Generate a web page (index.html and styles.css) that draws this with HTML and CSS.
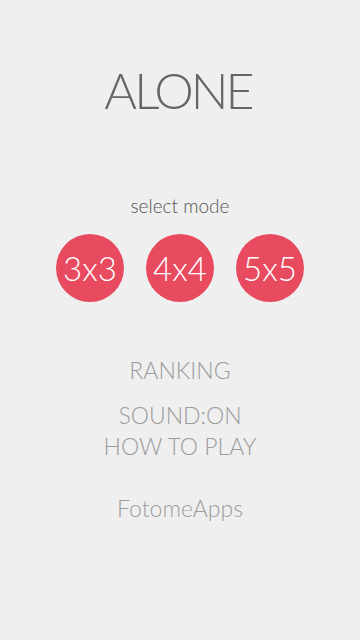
FILE: index.html
```html
<!DOCTYPE html>
<html>
<head>
<meta charset="utf-8">
<link rel="stylesheet" href="styles.css">
</head>
<body>
<main class="screen">
  <h1 class="title">ALONE</h1>
  <p class="select">select mode</p>
  <div class="modes">
    <div class="mode">3x3</div>
    <div class="mode">4x4</div>
    <div class="mode">5x5</div>
  </div>
  <nav class="menu">
    <div class="item ranking">RANKING</div>
    <div class="item sound">SOUND:ON</div>
    <div class="item howto">HOW TO PLAY</div>
  </nav>
  <div class="brand">FotomeApps</div>
</main>
</body>
</html>
```
FILE: styles.css
```css
html, body {
  margin: 0;
  padding: 0;
  background: #efefef;
}
.screen {
  width: 360px;
  height: 640px;
  display: flex;
  flex-direction: column;
  align-items: center;
  font-family: Lato, "Open Sans", sans-serif;
  font-weight: 300;
}
.title {
  margin: 62px 0 0;
  padding-right: 4px;
  font-size: 50px;
  line-height: 56px;
  font-weight: 300;
  color: #666;
  letter-spacing: -3px;
}
.select {
  margin: 76px 0 0;
  font-size: 19px;
  line-height: 24px;
  color: #555;
}
.modes {
  margin-top: 16px;
  display: flex;
  gap: 22px;
}
.mode {
  width: 68px;
  height: 68px;
  border-radius: 50%;
  background: #e84a5f;
  color: #fff;
  font-size: 33px;
  display: flex;
  align-items: center;
  justify-content: center;
}
.menu {
  margin-top: 53px;
  display: flex;
  flex-direction: column;
  align-items: center;
}
.item {
  font-size: 23px;
  line-height: 30px;
  color: #9c9c9c;
}
.sound {
  margin-top: 15px;
}
.howto {
  margin-top: 1px;
}
.brand {
  margin-top: 32px;
  font-size: 23px;
  line-height: 30px;
  color: #9c9c9c;
}
```
